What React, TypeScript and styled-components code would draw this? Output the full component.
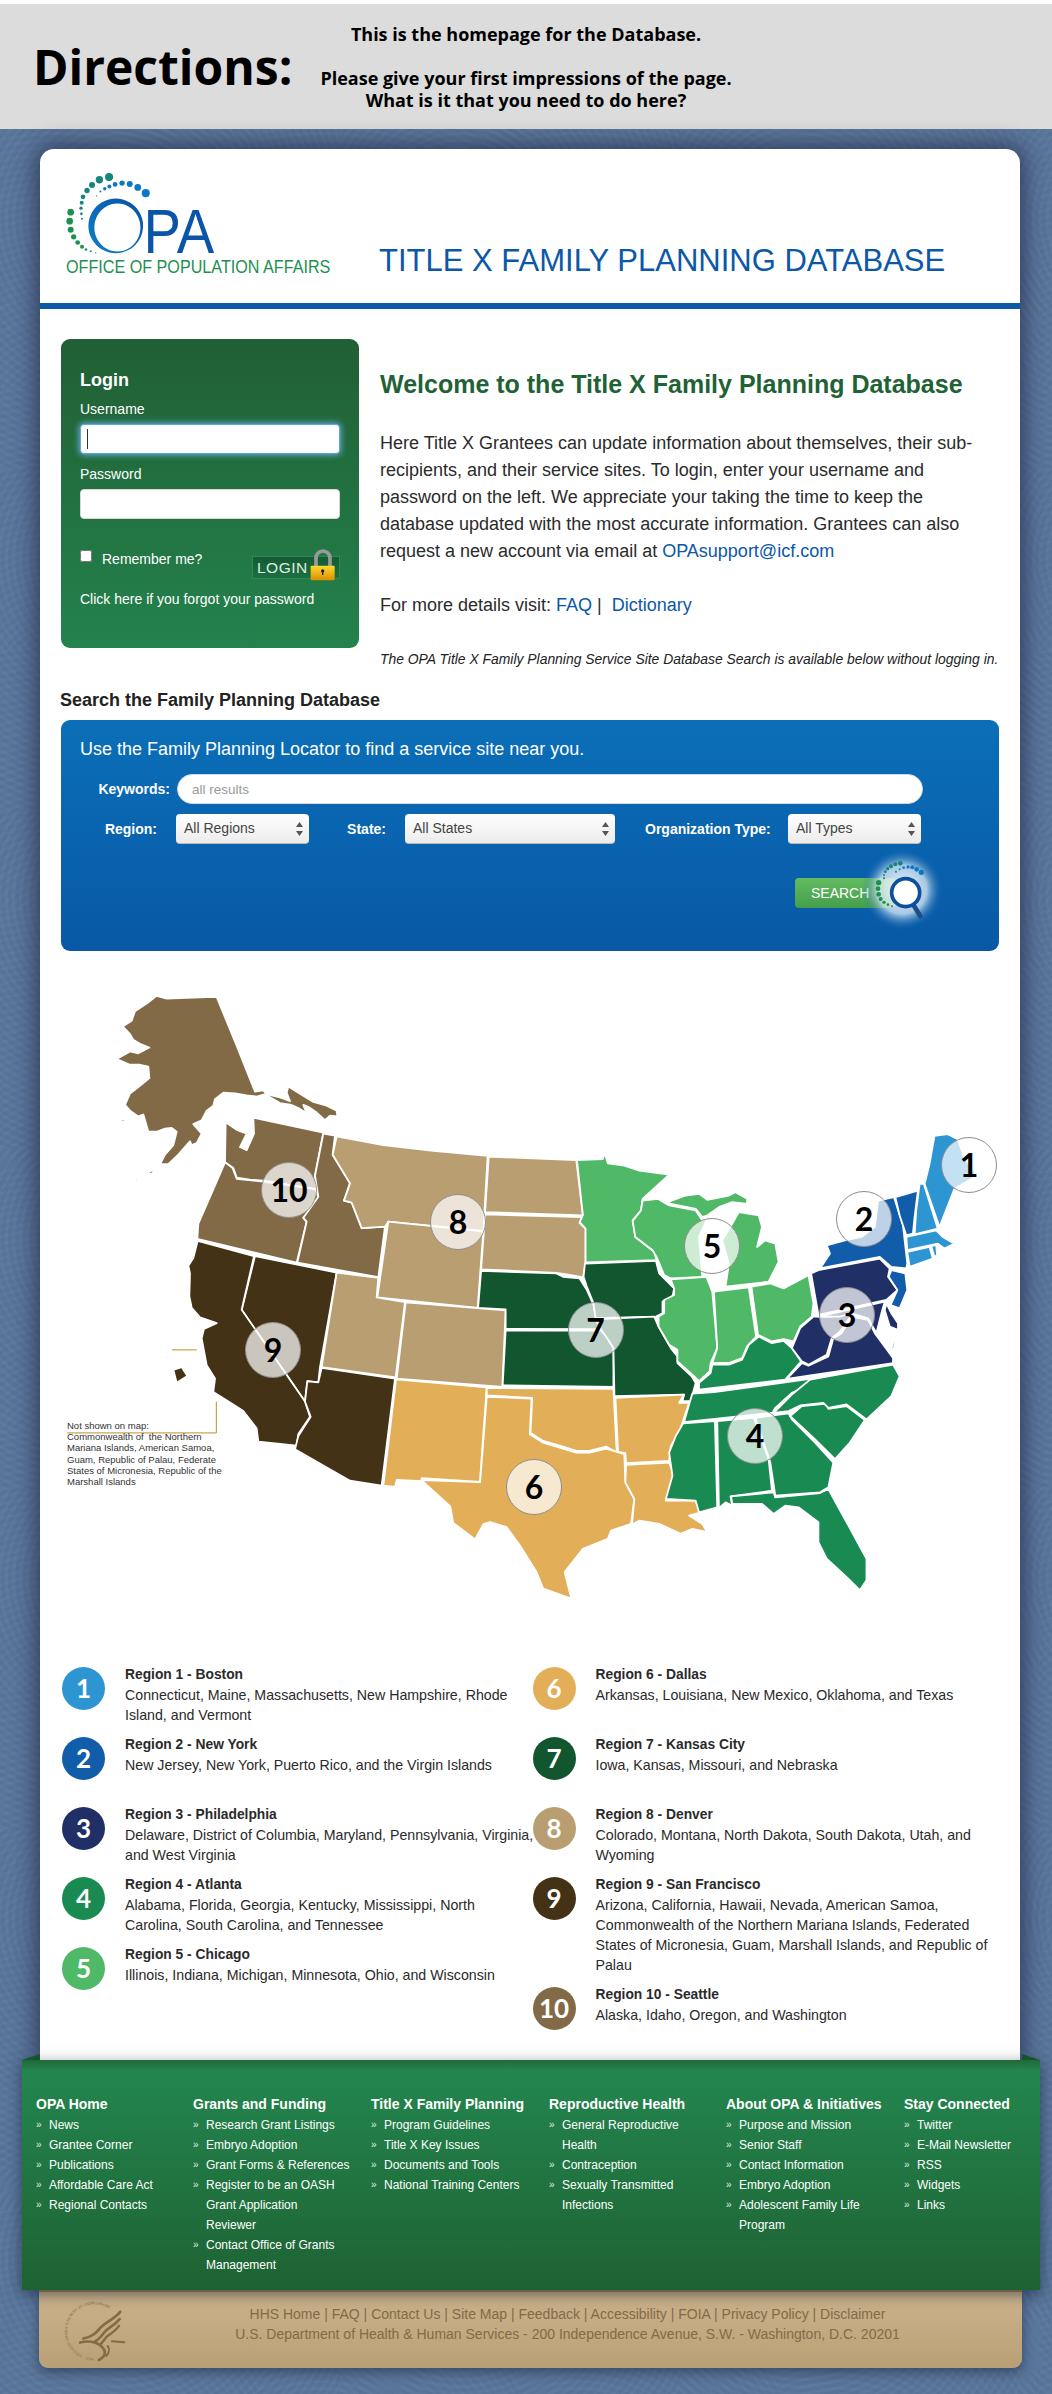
import React from "react";
import styled, { createGlobalStyle } from "styled-components";

const Global = createGlobalStyle`
  html, body { margin: 0; padding: 0; background: #fff; }
  * { box-sizing: border-box; }
  body { font-family: "Liberation Sans", Arial, sans-serif; color: #222; }
`;

const swirl = (x: number, y: number, a: number) =>
  `repeating-radial-gradient(circle at ${x}px ${y}px, rgba(255,255,255,${a}) 0 3px, rgba(30,40,90,${a}) 3px 7px)`;

const Shell = styled.div`
  width: 1052px;
  height: 2394px;
  padding-top: 4px;
  overflow: hidden;
  background: #fff;
`;
const Band = styled.header`
  height: 125px;
  background: #dcdcdc;
  display: flex;
  align-items: center;
  font-family: "Open Sans", sans-serif;
  color: #000;
`;
const BandTitle = styled.h1`
  margin: 0 0 0 33px;
  width: 283px;
  font-size: 48px;
  line-height: 60px;
  font-weight: 700;
`;
const BandText = styled.p`
  margin: 0;
  width: 420px;
  text-align: center;
  font-size: 18px;
  line-height: 22px;
  font-weight: 700;
`;
const Page = styled.div`
  height: 2265px;
  padding-top: 20px;
  background-color: #587599;
  background-image: ${swirl(120, 90, 0.018)}, ${swirl(60, 300, 0.014)};
  background-size: 340px 340px, 260px 260px;
`;
const Card = styled.main`
  width: 980px;
  height: 1911px;
  margin-left: 40px;
  background: #fff;
  border-radius: 14px 14px 0 0;
  box-shadow: 0 0 22px 4px rgba(25, 30, 60, 0.65);
`;
const Masthead = styled.div`
  height: 154px;
  padding: 21px 0 0 25px;
  display: flex;
  align-items: flex-start;
`;
const Logo = styled.svg`
  flex: none;
  width: 267px;
  height: 107px;
`;
const SiteTitle = styled.div`
  margin: 71px 0 0 47px;
  font-size: 31px;
  line-height: 40px;
  color: #0b58a8;
  white-space: nowrap;
`;
const BlueBar = styled.div`
  height: 6px;
  background: #0a5aa8;
`;
const Intro = styled.section`
  padding: 30px 0 0 21px;
  display: flex;
  gap: 21px;
`;
const LoginPanel = styled.form`
  flex: none;
  width: 298px;
  height: 309px;
  padding: 30px 19px 0;
  border-radius: 9px;
  background: linear-gradient(#215f34, #23824d);
  color: #fff;
`;
const LoginTitle = styled.h3`
  margin: 0 0 8px;
  font-size: 18px;
  line-height: 22px;
`;
const FieldLabel = styled.label`
  display: block;
  font-size: 14px;
  line-height: 20px;
  margin-top: 10px;
  &:first-of-type { margin-top: 0; }
`;
const FieldWrap = styled.div`
  position: relative;
  margin-top: 5px;
`;
const TextField = styled.input<{ $focus?: boolean }>`
  display: block;
  width: 260px;
  height: 30px;
  border: 1px solid ${(p) => (p.$focus ? "#5aa7e6" : "#d8d8d8")};
  border-radius: 4px;
  background: #fff;
  box-shadow: ${(p) => (p.$focus ? "0 0 6px 1px rgba(110,180,240,.9)" : "none")};
  outline: none;
`;
const Caret = styled.span`
  position: absolute;
  left: 7px;
  top: 5px;
  width: 1px;
  height: 20px;
  background: #333;
`;
const RememberRow = styled.div`
  display: flex;
  align-items: flex-start;
  margin-top: 25px;
`;
const Check = styled.input`
  width: 12px;
  height: 12px;
  margin: 6px 10px 0 0;
  accent-color: #fff;
`;
const RememberText = styled.span`
  margin-top: 5px;
  font-size: 14px;
  line-height: 20px;
`;
const LoginButton = styled.button`
  position: relative;
  flex: none;
  margin: 12px 0 0 auto;
  width: 88px;
  height: 23px;
  padding: 0 0 0 4px;
  border: 1px solid #2a8a55;
  background: linear-gradient(#155a34, #1c7040);
  color: #dfeee5;
  font: 15.5px/21px "Liberation Sans", sans-serif;
  letter-spacing: 0.5px;
  text-align: left;
`;
const LockIcon = styled.svg`
  position: absolute;
  left: 56px;
  top: -9px;
  width: 28px;
  height: 39px;
`;
const Forgot = styled.div`
  margin-top: 10px;
  font-size: 14px;
  line-height: 20px;
`;
const IntroText = styled.div`
  width: 620px;
  padding-top: 30px;
`;
const Welcome = styled.h2`
  margin: 0;
  font-size: 25px;
  line-height: 30px;
  color: #1f6235;
  white-space: nowrap;
`;
const Body = styled.p<{ $top: number }>`
  margin: ${(p) => p.$top}px 0 0;
  font-size: 18px;
  line-height: 27px;
  color: #2b2b2b;
`;
const TextLink = styled.a`
  color: #0a58a8;
`;
const Note = styled.p`
  margin: 30px 0 0;
  font-size: 13.9px;
  line-height: 20px;
  font-style: italic;
  white-space: nowrap;
  color: #222;
`;
const SearchHeading = styled.h3`
  margin: 21px 0 0 20px;
  font-size: 18px;
  line-height: 20px;
  color: #222;
`;
const SearchPanel = styled.form`
  margin: 10px 0 0 21px;
  width: 938px;
  height: 231px;
  padding-top: 17px;
  border-radius: 9px;
  background: linear-gradient(#0b6fb8, #0858a5);
  color: #fff;
`;
const SearchLead = styled.div`
  margin-left: 19px;
  font-size: 18px;
  line-height: 24px;
`;
const SearchRow = styled.div<{ $top: number }>`
  display: flex;
  align-items: center;
  margin-top: ${(p) => p.$top}px;
  height: 30px;
`;
const SearchLabel = styled.label<{ $w: number; $ml?: number; $gap: number }>`
  width: ${(p) => p.$w}px;
  margin-left: ${(p) => p.$ml ?? 0}px;
  margin-right: ${(p) => p.$gap}px;
  text-align: right;
  font-size: 14px;
  font-weight: 700;
  white-space: nowrap;
`;
const Keyword = styled.input`
  width: 746px;
  height: 30px;
  padding: 0 14px;
  border: 1px solid #cfd8e4;
  border-radius: 15px;
  background: #fff;
  font: 13.5px "Liberation Sans", sans-serif;
  &::placeholder { color: #9a9a9a; opacity: 1; }
`;
const SelectBox = styled.div<{ $w: number }>`
  position: relative;
  width: ${(p) => p.$w}px;
  height: 30px;
  padding-left: 8px;
  border-radius: 4px;
  background: linear-gradient(#fff, #ececec);
  border-bottom: 1px solid #bbb;
  color: #444;
  font-size: 14px;
  line-height: 28px;
`;
const Arrows = styled.svg`
  position: absolute;
  right: 6px;
  top: 8px;
  width: 7px;
  height: 14px;
`;
const SearchButtonWrap = styled.div`
  position: relative;
  margin: 34px 0 0 734px;
  width: 110px;
  height: 30px;
`;
const SearchButton = styled.button`
  width: 100px;
  height: 30px;
  padding: 0 0 0 16px;
  border: none;
  border-radius: 4px;
  background: linear-gradient(#64bb60, #449f4c);
  color: #fff;
  font: 14px/30px "Liberation Sans", sans-serif;
  text-align: left;
`;
const Magnifier = styled.svg`
  position: absolute;
  left: 58px;
  top: -29px;
  width: 90px;
  height: 96px;
`;
const MapWrap = styled.section`
  position: relative;
  height: 714px;
`;
const MapSvg = styled.svg`
  display: block;
  width: 980px;
  height: 714px;
`;
const State = styled.path`
  stroke: #fff;
  stroke-width: 1.8;
  stroke-linejoin: round;
  vector-effect: non-scaling-stroke;
`;
const Pin = styled.div<{ $x: number; $y: number }>`
  position: absolute;
  left: ${(p) => p.$x - 68}px;
  top: ${(p) => p.$y - 978}px;
  width: 56px;
  height: 56px;
  border-radius: 50%;
  border: 1px solid #8d8d8d;
  background: rgba(255, 255, 255, 0.72);
  color: #000;
  font: 700 32px/54px Lato, sans-serif;
  text-align: center;
`;
const MapNote = styled.div`
  position: absolute;
  left: 27px;
  top: 469px;
  width: 170px;
  font-size: 9.5px;
  line-height: 11.2px;
  color: #333;
  white-space: nowrap;
`;
const Legend = styled.section`
  display: grid;
  grid-template-columns: 470.5px 1fr;
  padding-left: 22px;
`;
const LegendItem = styled.div`
  display: flex;
  min-height: 60px;
  margin-bottom: 10px;
`;
const LegendDot = styled.div<{ $c: string }>`
  flex: none;
  width: 43px;
  height: 43px;
  margin: 2px 20px 0 0;
  border-radius: 50%;
  background: ${(p) => p.$c};
  color: #fff;
  font: 700 26px/43px Lato, sans-serif;
  text-align: center;
`;
const LegendBody = styled.div`
  flex: none;
  width: 410.5px;
  font-size: 14.2px;
  line-height: 20px;
  color: #2a2a2a;
`;
const LegendName = styled.div`
  font-weight: 700;
  font-size: 13.8px;
`;
const FooterGreen = styled.footer`
  position: relative;
  width: 1018px;
  height: 230px;
  margin-left: 22px;
  padding: 34px 0 0 14px;
  display: grid;
  grid-template-columns: 157px 178px 178px 177px 178px 1fr;
  align-items: start;
  background: linear-gradient(#1f6a38 0, #257c47 8px, #23864f 10px, #1e6232 100%);
  box-shadow: 0 4px 14px rgba(10, 20, 40, 0.55);
  &::before, &::after {
    content: "";
    position: absolute;
    top: -6px;
    border-bottom: 6px solid #13562e;
  }
  &::before { left: 0; border-left: 18px solid transparent; }
  &::after { right: 0; border-right: 18px solid transparent; }
`;
const FootCol = styled.div`
  width: 157px;
  color: #fff;
`;
const FootHead = styled.h4`
  margin: 0 0 1px;
  font-size: 14px;
  line-height: 20px;
  white-space: nowrap;
`;
const FootList = styled.ul`
  margin: 0;
  padding: 0;
  list-style: none;
`;
const FootLink = styled.li`
  display: flex;
  font-size: 12px;
  line-height: 20px;
  &::before {
    content: "»";
    flex: 0 0 13px;
    font-size: 10px;
    opacity: 0.85;
  }
`;
const FooterTan = styled.div`
  width: 983px;
  height: 78px;
  margin-left: 39px;
  display: flex;
  border-radius: 0 0 9px 9px;
  background: linear-gradient(#cdb48d, #b89f75);
  border-top: 2px solid #a58a5f;
  box-shadow: 0 4px 12px rgba(20, 25, 50, 0.5);
`;
const Seal = styled.svg`
  flex: none;
  width: 67px;
  height: 67px;
  margin: 5px 0 0 21px;
`;
const FootLegal = styled.div`
  flex: 1;
  padding: 12px 14px 0 0;
  text-align: center;
  font-size: 14px;
  line-height: 20px;
  color: #846b46;
`;

const C = { r1: "#2e95d3", r2: "#125da9", r3: "#203067", r4: "#198b52", r5: "#4fb967", r6: "#e2af58", r7: "#125630", r8: "#b99e72", r9: "#433215", r10: "#836a46" };

const west: [string, string][] = [
  [C.r10, "M320,65 L350,72 L410,70 L470,68 L500,68 L560,195 L615,315 L640,312 L650,322 L690,330 L720,340 L710,318 L715,302 L745,318 L790,342 L830,352 L860,365 L862,380 L840,378 L825,390 L800,370 L775,355 L760,350 L770,372 L745,358 L725,350 L690,345 L645,322 L620,328 L590,325 L555,320 L520,318 L495,335 L490,352 L470,365 L455,390 L430,400 L455,425 L440,450 L425,455 L420,445 L400,465 L385,480 L355,505 L330,505 L345,480 L370,455 L380,420 L365,410 L345,412 L320,420 L295,420 L280,375 L265,380 L240,365 L225,350 L240,320 L270,300 L298,280 L295,250 L270,245 L240,245 L200,230 L240,210 L265,215 L298,200 L270,190 L250,180 L240,165 L218,145 L245,130 L255,105 L290,85 Z"],
  [C.r10, "M205,392 L225,385 L222,394 Z M290,530 L320,512 L305,530 Z M245,552 L268,540 L262,550 Z"],
  [C.r10, "M610,383 L820,422 L795,535 L800,570 L640,548 L600,545 L560,540 L550,515 L525,500 L527,395 L560,415 L590,425 L570,460 L590,468 L612,425 Z"],
  [C.r10, "M525,500 L548,515 L560,543 L640,550 L795,570 L805,590 L790,620 L760,645 L770,655 L740,762 L442,700 L445,660 L480,590 Z"],
  [C.r10, "M820,425 L855,430 L848,480 L900,555 L882,600 L905,605 L935,672 L1005,668 L985,800 L742,762 L770,655 L760,645 L805,590 L795,535 Z"],
  [C.r8, "M860,432 L1000,455 L1150,470 L1313,483 L1300,680 L1015,655 L1005,668 L935,672 L905,605 L882,600 L900,555 L848,480 Z"],
  [C.r8, "M1015,655 L1300,680 L1283,880 L982,853 Z"],
  [C.r9, "M615,745 L860,788 L810,1035 L805,1075 L772,1072 L765,1125 L575,885 Z"],
  [C.r9, "M443,705 L612,745 L575,885 L765,1125 L780,1165 L745,1210 L740,1240 L625,1230 L620,1195 L580,1150 L545,1130 L490,1100 L495,1065 L470,1030 L455,960 L462,935 L500,920 L450,905 L425,880 L418,850 L420,790 L415,770 L430,750 Z"],
  [C.r9, "M815,1037 L1035,1065 L995,1345 L900,1332 L735,1250 L745,1215 L782,1165 L765,1125 L772,1072 L805,1075 Z"],
  [C.r9, "M370,1042 L395,1035 L412,1058 L380,1076 Z M212,955 L225,956 L220,962 Z M278,978 L290,984 L282,986 Z M340,1004 L360,1010 L348,1013 Z"],
  [C.r8, "M860,788 L985,802 L980,853 L1065,865 L1037,1062 L815,1035 Z"],
  [C.r8, "M1067,866 L1367,887 L1357,1087 L1040,1065 Z"],
  [C.r6, "M1038,1067 L1310,1088 L1290,1335 L1115,1325 L1115,1333 L1040,1330 L1035,1348 L1000,1345 Z"],
];

const east: [string, string][] = [
  [C.r8, "M-34,168 L230,178 L250,345 L-45,335 Z"],
  [C.r8, "M-45,342 L250,350 L240,368 L258,385 L258,490 L250,532 L215,525 L170,518 L-57,508 Z"],
  [C.r7, "M-57,512 L170,520 L190,530 L240,535 L262,570 L282,615 L288,650 L305,688 L17,687 L17,628 L-66,624 Z"],
  [C.r7, "M17,692 L305,692 L320,710 L342,745 L342,862 L8,857 Z"],
  [C.r7, "M256,490 L470,482 L480,520 L525,565 L520,590 L490,605 L490,640 L470,650 L288,655 L282,610 L262,560 L252,530 Z"],
  [C.r7, "M288,658 L465,650 L478,680 L515,745 L535,770 L535,790 L578,830 L590,850 L575,905 L550,905 L555,885 L345,890 L342,745 L320,710 L305,690 Z"],
  [C.r6, "M-40,865 L342,868 L352,1060 L320,1042 L270,1055 L230,1055 L190,1042 L130,1025 L92,1000 L97,895 L-40,888 Z"],
  [C.r6, "M-40,892 L95,897 L90,1005 L130,1030 L190,1048 L230,1060 L270,1060 L320,1048 L375,1065 L378,1150 L405,1200 L395,1275 L335,1295 L325,1320 L250,1350 L195,1420 L215,1500 L130,1470 L110,1420 L60,1340 L20,1285 L-30,1270 L-50,1276 L-75,1322 L-141,1272 L-150,1222 L-237,1143 L-60,1149 Z"],
  [C.r6, "M348,895 L555,885 L540,910 L570,910 L555,955 L540,1000 L515,1040 L510,1085 L380,1092 L378,1062 L356,1058 Z"],
  [C.r6, "M380,1097 L510,1090 L525,1130 L500,1205 L590,1205 L605,1240 L570,1250 L610,1275 L625,1300 L580,1290 L545,1305 L480,1275 L420,1265 L398,1278 L405,1200 L378,1150 Z"],
  [C.r5, "M232,178 L310,175 L315,155 L325,188 L375,195 L420,210 L510,222 L430,295 L425,330 L400,360 L408,410 L465,455 L472,480 L258,487 L258,385 L240,365 L250,345 Z"],
  [C.r5, "M430,300 L475,295 L510,315 L590,330 L610,360 L625,355 L600,410 L610,530 L515,535 L495,525 L472,470 L460,450 L408,410 L400,362 L425,330 Z"],
  [C.r5, "M505,305 L560,285 L600,280 L625,298 L690,285 L710,275 L745,295 L745,310 L700,305 L660,320 L625,345 L610,350 L590,325 L515,310 Z"],
  [C.r5, "M720,335 L780,345 L790,380 L775,440 L800,420 L830,430 L840,485 L810,545 L680,560 L690,490 L670,420 L700,370 Z"],
  [C.r5, "M515,538 L622,530 L640,575 L652,705 L655,745 L635,790 L632,815 L600,845 L580,825 L535,785 L535,750 L510,735 L478,680 L478,650 L495,640 L495,600 L525,585 L525,565 Z"],
  [C.r5, "M645,575 L750,562 L772,710 L745,740 L730,775 L690,790 L640,790 L655,745 Z"],
  [C.r5, "M758,560 L815,550 L855,565 L930,525 L945,610 L940,650 L905,680 L885,725 L855,718 L820,725 L778,705 Z"],
  [C.r4, "M640,795 L690,795 L730,780 L750,735 L780,710 L820,730 L855,723 L880,745 L908,785 L860,840 L645,865 L600,870 L600,850 L635,820 Z"],
  [C.r4, "M580,882 L645,878 L935,838 L925,860 L880,880 L830,925 L822,940 L555,968 L570,915 Z"],
  [C.r4, "M552,972 L648,965 L655,1225 L600,1240 L590,1205 L500,1200 L520,1130 L510,1060 L530,1010 Z"],
  [C.r4, "M655,965 L765,955 L810,1080 L820,1175 L695,1192 L700,1220 L680,1210 L660,1228 Z"],
  [C.r4, "M770,955 L870,942 L880,960 L950,1030 L1005,1090 L990,1165 L965,1180 L830,1190 L815,1090 Z"],
  [C.r4, "M697,1192 L825,1180 L830,1195 L965,1182 L990,1170 L1045,1270 L1105,1380 L1105,1445 L1085,1475 L1050,1440 L985,1380 L960,1330 L960,1270 L900,1225 L860,1220 L825,1245 L790,1215 L700,1215 Z"],
  [C.r4, "M875,950 L910,920 L985,912 L990,928 L1045,920 L1100,962 L1055,1030 L1010,1080 L950,1020 Z"],
  [C.r4, "M825,940 L880,885 L935,840 L1185,795 L1205,830 L1180,890 L1105,960 L1045,915 L990,925 L975,910 L905,918 L870,935 Z"],
  [C.r3, "M865,838 L910,790 L930,798 L990,770 L1005,715 L1030,700 L1060,650 L1110,660 L1130,700 L1185,775 L1185,790 Z"],
  [C.r3, "M880,745 L905,685 L945,650 L1000,650 L1020,645 L1060,645 L1025,695 L1000,715 L985,765 L930,795 L910,785 Z"],
  [C.r3, "M938,520 L960,510 L1145,475 L1175,505 L1170,530 L1198,570 L1165,600 L960,645 Z"],
  [C.r3, "M960,650 L1160,605 L1150,640 L1135,700 L1110,655 L1075,645 L1060,640 L1025,650 Z M1165,610 L1180,640 L1200,670 L1200,690 L1175,680 L1160,630 Z"],
  [C.r2, "M985,435 L1040,420 L1090,410 L1130,380 L1140,300 L1188,290 L1215,375 L1228,490 L1225,505 L1180,500 L1145,470 L965,505 L995,460 Z"],
  [C.r2, "M1180,510 L1222,520 L1228,570 L1205,625 L1178,615 L1198,570 L1172,530 Z M1228,530 L1275,508 L1270,515 L1235,532 Z"],
  [C.r2, "M1192,290 L1260,270 L1250,350 L1245,400 L1225,405 L1205,345 Z"],
  [C.r1, "M1265,250 L1278,250 L1320,385 L1250,402 L1255,330 Z"],
  [C.r1, "M1310,105 L1350,100 L1380,115 L1400,170 L1440,225 L1370,265 L1325,380 L1280,250 L1295,190 Z"],
  [C.r1, "M1225,410 L1315,390 L1335,410 L1370,430 L1340,445 L1320,430 L1228,450 Z"],
  [C.r1, "M1228,455 L1295,440 L1305,475 L1235,500 Z M1300,438 L1315,433 L1318,465 L1310,470 Z"],
  [C.r1, "M1195,700 L1198,705 L1186,750 L1180,745 Z"],
];

const pins: [string, number, number][] = [
  ["1", 969, 1164], ["2", 864, 1218], ["3", 847, 1314], ["4", 755, 1435], ["5", 712, 1245],
  ["6", 534, 1486], ["7", 595.5, 1329], ["8", 458, 1221], ["9", 273, 1349], ["10", 289, 1189],
];

const legendLeft = [
  ["1", C.r1, "Region 1 - Boston", "Connecticut, Maine, Massachusetts, New Hampshire, Rhode Island, and Vermont"],
  ["2", C.r2, "Region 2 - New York", "New Jersey, New York, Puerto Rico, and the Virgin Islands"],
  ["3", C.r3, "Region 3 - Philadelphia", "Delaware, District of Columbia, Maryland, Pennsylvania, Virginia, and West Virginia"],
  ["4", C.r4, "Region 4 - Atlanta", "Alabama, Florida, Georgia, Kentucky, Mississippi, North Carolina, South Carolina, and Tennessee"],
  ["5", C.r5, "Region 5 - Chicago", "Illinois, Indiana, Michigan, Minnesota, Ohio, and Wisconsin"],
];
const legendRight = [
  ["6", C.r6, "Region 6 - Dallas", "Arkansas, Louisiana, New Mexico, Oklahoma, and Texas"],
  ["7", C.r7, "Region 7 - Kansas City", "Iowa, Kansas, Missouri, and Nebraska"],
  ["8", C.r8, "Region 8 - Denver", "Colorado, Montana, North Dakota, South Dakota, Utah, and Wyoming"],
  ["9", C.r9, "Region 9 - San Francisco", "Arizona, California, Hawaii, Nevada, American Samoa, Commonwealth of the Northern Mariana Islands, Federated States of Micronesia, Guam, Marshall Islands, and Republic of Palau"],
  ["10", C.r10, "Region 10 - Seattle", "Alaska, Idaho, Oregon, and Washington"],
];

const footer: [string, string[]][] = [
  ["OPA Home", ["News", "Grantee Corner", "Publications", "Affordable Care Act", "Regional Contacts"]],
  ["Grants and Funding", ["Research Grant Listings", "Embryo Adoption", "Grant Forms & References", "Register to be an OASH Grant Application Reviewer", "Contact Office of Grants Management"]],
  ["Title X Family Planning", ["Program Guidelines", "Title X Key Issues", "Documents and Tools", "National Training Centers"]],
  ["Reproductive Health", ["General Reproductive Health", "Contraception", "Sexually Transmitted Infections"]],
  ["About OPA & Initiatives", ["Purpose and Mission", "Senior Staff", "Contact Information", "Embryo Adoption", "Adolescent Family Life Program"]],
  ["Stay Connected", ["Twitter", "E-Mail Newsletter", "RSS", "Widgets", "Links"]],
];

const dots = {
  teal: [[327,171,12],[298,179,11],[276,195,9],[261,211,8],[249,230,7],[245,248,6],[243,264,5],[244,281,4],[246,296,3]],
  blue: [[437,219,12],[413,202,10],[389,192,9],[366,189,8],[345,193,7],[328,199,6],[314,206,5],[301,214,3],[290,227,2]],
  green: [[212,276,10],[209,303,10],[212,329,9],[221,350,8],[233,367,7],[246,380,6],[258,388,4],[272,393,3],[287,398,2]],
};

const magDots = {
  teal: [[362,39,7],[347,42,6],[334,48,6],[324,55,5],[317,64,4],[313,74,3],[313,84,3]],
  blue: [[425,66,8],[411,57,7],[398,51,6],[385,50,5],[372,52,4],[360,57,3],[349,64,3]],
  green: [[297,97,8],[295,115,7],[297,132,7],[303,146,6],[313,156,5],[325,163,4],[337,168,3]],
};

function Dots({ set, fill }: { set: number[][]; fill: string }) {
  return <>{set.map(([x, y, r], i) => <circle key={i} cx={x} cy={y} r={r} fill={fill} />)}</>;
}

function LegendColumn({ items }: { items: string[][] }) {
  return (
    <div>
      {items.map(([n, c, t, d]) => (
        <LegendItem key={n}>
          <LegendDot $c={c}>{n}</LegendDot>
          <LegendBody>
            <LegendName>{t}</LegendName>
            {d}
          </LegendBody>
        </LegendItem>
      ))}
    </div>
  );
}

function Choice({ w, text }: { w: number; text: string }) {
  return (
    <SelectBox $w={w}>
      {text}
      <Arrows viewBox="0 0 7 14">
        <path d="M3.5 0 L7 5 L0 5 Z M3.5 14 L0 9 L7 9 Z" fill="#555" />
      </Arrows>
    </SelectBox>
  );
}

export default function App() {
  return (
    <Shell>
      <Global />
      <Band>
        <BandTitle>Directions:</BandTitle>
        <BandText>
          This is the homepage for the Database.
          <br />
          <br />
          Please give your first impressions of the page.
          <br />
          What is it that you need to do here?
        </BandText>
      </Band>
      <Page>
        <Card>
          <Masthead>
            <Logo viewBox="195 150 800 320">
              <defs>
                <linearGradient id="oGrad" x1="0" y1="1" x2="1" y2="0">
                  <stop offset="0" stopColor="#0b80c8" />
                  <stop offset="1" stopColor="#0a50a4" />
                </linearGradient>
              </defs>
              <Dots set={dots.teal} fill="#14857f" />
              <Dots set={dots.blue} fill="#0b78c4" />
              <Dots set={dots.green} fill="#1f8f50" />
              <path
                fillRule="evenodd"
                fill="url(#oGrad)"
                d="M347,235 a82,82 0 1,0 0.1,0 Z M352,250 a69,72 0 1,1 -0.1,0 Z"
              />
              <text x="430" y="398" fontFamily="Liberation Sans" fontSize="186" fill="#0a55a8" textLength="212" lengthAdjust="spacingAndGlyphs">PA</text>
              <text x="198" y="458" fontFamily="Liberation Sans" fontSize="53" fill="#1f8f50" textLength="792" lengthAdjust="spacingAndGlyphs">OFFICE OF POPULATION AFFAIRS</text>
            </Logo>
            <SiteTitle>TITLE X FAMILY PLANNING DATABASE</SiteTitle>
          </Masthead>
          <BlueBar />
          <Intro>
            <LoginPanel>
              <LoginTitle>Login</LoginTitle>
              <FieldLabel>Username</FieldLabel>
              <FieldWrap>
                <TextField $focus />
                <Caret />
              </FieldWrap>
              <FieldLabel>Password</FieldLabel>
              <FieldWrap>
                <TextField />
              </FieldWrap>
              <RememberRow>
                <Check type="checkbox" />
                <RememberText>Remember me?</RememberText>
                <LoginButton type="button">
                  LOGIN
                  <LockIcon viewBox="205 25 84 117">
                    <path d="M226,85 V55 a21,21 0 0 1 42,0 V85" fill="none" stroke="#9a9a9a" strokeWidth="11" />
                    <defs>
                      <linearGradient id="lockG" x1="0" y1="0" x2="0" y2="1">
                        <stop offset="0" stopColor="#ffd92e" />
                        <stop offset="1" stopColor="#d98f00" />
                      </linearGradient>
                    </defs>
                    <rect x="210" y="78" width="72" height="44" rx="3" fill="url(#lockG)" />
                    <circle cx="246" cy="94" r="5" fill="#222" />
                    <rect x="244" y="94" width="4" height="12" fill="#222" />
                  </LockIcon>
                </LoginButton>
              </RememberRow>
              <Forgot>Click here if you forgot your password</Forgot>
            </LoginPanel>
            <IntroText>
              <Welcome>Welcome to the Title X Family Planning Database</Welcome>
              <Body $top={31}>
                Here Title X Grantees can update information about themselves, their sub-recipients, and their service sites. To login, enter your username and password on the left. We appreciate your taking the time to keep the database updated with the most accurate information. Grantees can also request a new account via email at <TextLink>OPAsupport@icf.com</TextLink>
              </Body>
              <Body $top={27}>
                For more details visit: <TextLink>FAQ</TextLink> |&nbsp; <TextLink>Dictionary</TextLink>
              </Body>
              <Note>The OPA Title X Family Planning Service Site Database Search is available below without logging in.</Note>
            </IntroText>
          </Intro>
          <SearchHeading>Search the Family Planning Database</SearchHeading>
          <SearchPanel>
            <SearchLead>Use the Family Planning Locator to find a service site near you.</SearchLead>
            <SearchRow $top={13}>
              <SearchLabel $w={109} $gap={7}>Keywords:</SearchLabel>
              <Keyword placeholder="all results" />
            </SearchRow>
            <SearchRow $top={10}>
              <SearchLabel $w={96} $gap={19}>Region:</SearchLabel>
              <Choice w={133} text="All Regions" />
              <SearchLabel $w={39} $ml={38} $gap={19}>State:</SearchLabel>
              <Choice w={210} text="All States" />
              <SearchLabel $w={124} $ml={30} $gap={19}>Organization Type:</SearchLabel>
              <Choice w={133} text="All Types" />
            </SearchRow>
            <SearchButtonWrap>
              <SearchButton type="button">SEARCH</SearchButton>
              <Magnifier viewBox="220 -4 270 288">
                <defs>
                  <radialGradient id="magGlow">
                    <stop offset="0" stopColor="#ffffff" stopOpacity="0.95" />
                    <stop offset="0.6" stopColor="#dcecf8" stopOpacity="0.75" />
                    <stop offset="1" stopColor="#0b5fa8" stopOpacity="0" />
                  </radialGradient>
                </defs>
                <circle cx="368" cy="118" r="122" fill="url(#magGlow)" />
                <Dots set={magDots.teal} fill="#14857f" />
                <Dots set={magDots.blue} fill="#0b78c4" />
                <Dots set={magDots.green} fill="#1f8f50" />
                <line x1="402" y1="165" x2="422" y2="198" stroke="#1c4f8a" strokeWidth="14" strokeLinecap="round" />
                <circle cx="378" cy="127" r="42" fill="#fff" stroke="#0b4f9e" strokeWidth="11" />
              </Magnifier>
            </SearchButtonWrap>
          </SearchPanel>
          <MapWrap>
            <MapSvg viewBox="40 950 980 714">
              <g transform="translate(50 970) scale(0.33333 0.3827)">
                {west.map(([fill, d], i) => <State key={i} fill={fill} d={d} />)}
                <path d="M366,990 H440 M499,1125 V1207 H52" fill="none" stroke="#c08f2a" strokeWidth="1" vectorEffect="non-scaling-stroke" />
              </g>
              <g transform="translate(500 1100) scale(0.33167)">
                {east.map(([fill, d], i) => <State key={i} fill={fill} d={d} />)}
              </g>
            </MapSvg>
            {pins.map(([n, x, y]) => <Pin key={n} $x={x} $y={y}>{n}</Pin>)}
            <MapNote>
              Not shown on map:
              <br />
              Commonwealth of&nbsp; the Northern
              <br />
              Mariana Islands, American Samoa,
              <br />
              Guam, Republic of Palau, Federate
              <br />
              States of Micronesia, Republic of the
              <br />
              Marshall Islands
            </MapNote>
          </MapWrap>
          <Legend>
            <LegendColumn items={legendLeft} />
            <LegendColumn items={legendRight} />
          </Legend>
        </Card>
        <FooterGreen>
          {footer.map(([h, links]) => (
            <FootCol key={h}>
              <FootHead>{h}</FootHead>
              <FootList>
                {links.map((l) => <FootLink key={l}>{l}</FootLink>)}
              </FootList>
            </FootCol>
          ))}
        </FooterGreen>
        <FooterTan>
          <Seal viewBox="180 80 200 200">
            <defs>
              <path id="sealRing" d="M330,108 A88,88 0 1,0 300,268" />
            </defs>
            <text fontFamily="Liberation Sans" fontSize="11" fill="#846b46" letterSpacing="1">
              <textPath href="#sealRing">DEPARTMENT OF HEALTH &amp; HUMAN SERVICES · USA</textPath>
            </text>
            <g fill="none" stroke="#846b46" strokeLinecap="round">
              <path d="M360,124 C340,150 320,150 300,172 C290,184 280,198 250,204" strokeWidth="8" />
              <path d="M358,146 C340,168 325,170 312,186 C302,198 295,208 285,212" strokeWidth="8" />
              <path d="M356,166 C345,184 330,188 318,200 C312,208 308,214 302,220" strokeWidth="7" />
              <path d="M240,216 C270,208 300,216 312,238 C318,250 310,262 296,268" strokeWidth="8" />
              <path d="M335,212 L372,215 M322,226 C330,236 326,248 318,256" strokeWidth="6" />
            </g>
          </Seal>
          <FootLegal>
            HHS Home | FAQ | Contact Us | Site Map | Feedback | Accessibility | FOIA | Privacy Policy | Disclaimer
            <br />
            U.S. Department of Health &amp; Human Services - 200 Independence Avenue, S.W. - Washington, D.C. 20201
          </FootLegal>
        </FooterTan>
      </Page>
    </Shell>
  );
}
